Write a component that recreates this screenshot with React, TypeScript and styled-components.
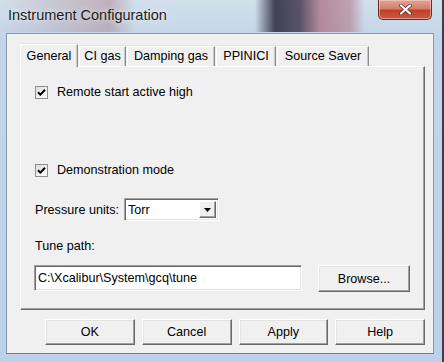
import { createGlobalStyle, styled } from 'styled-components';

const GlobalStyle = createGlobalStyle`
  html, body {
    margin: 0;
    padding: 0;
    width: 444px;
    height: 362px;
    overflow: hidden;
    font-family: "Liberation Sans", Arial, sans-serif;
    font-size: 12.6px;
    color: #000;
  }
`;

const tabs = [
  { label: 'General', width: 58 },
  { label: 'CI gas', width: 47 },
  { label: 'Damping gas', width: 88 },
  { label: 'PPINICI', width: 60 },
  { label: 'Source Saver', width: 92 },
];
const buttons = ['OK', 'Cancel', 'Apply', 'Help'];

const CheckIcon = () => (
  <svg width="9" height="9" viewBox="0 0 9 9">
    <path d="M1 4.2 L3.4 6.6 L8 1.8" fill="none" stroke="#000" strokeWidth="2" />
  </svg>
);

const App = () => {
  return (
    <>
      <GlobalStyle />
      <Window>
        <TitleBar>
          <Title>Instrument Configuration</Title>
          <CloseButton>
            <svg width="13" height="11" viewBox="0 0 13 11">
              <path d="M2 1.5 L11 9.5 M11 1.5 L2 9.5" stroke="#5a2a20" strokeWidth="3.6" strokeLinecap="round" />
              <path d="M2 1.5 L11 9.5 M11 1.5 L2 9.5" stroke="#fff" strokeWidth="2.2" strokeLinecap="round" />
            </svg>
          </CloseButton>
        </TitleBar>
        <Client>
          <TabRow>
            {tabs.map((t, i) => (
              <Tab key={t.label} $active={i === 0} $width={t.width}>
                {t.label}
              </Tab>
            ))}
          </TabRow>
          <Panel>
            <CheckRow $top={18}>
              <CheckBox>
                <CheckIcon />
              </CheckBox>
              Remote start active high
            </CheckRow>
            <CheckRow $top={64}>
              <CheckBox>
                <CheckIcon />
              </CheckBox>
              Demonstration mode
            </CheckRow>
            <FieldRow>
              <Label>Pressure units:</Label>
              <Select>
                <SelectValue>Torr</SelectValue>
                <DropButton>
                  <svg width="7" height="4" viewBox="0 0 7 4">
                    <path d="M0 0 H7 L3.5 4 Z" fill="#000" />
                  </svg>
                </DropButton>
              </Select>
            </FieldRow>
            <PathLabel>Tune path:</PathLabel>
            <PathRow>
              <TextInput>C:\Xcalibur\System\gcq\tune</TextInput>
              <Button $width={92} $height={27}>Browse...</Button>
            </PathRow>
          </Panel>
          <ButtonRow>
            {buttons.map((b) => (
              <Button key={b} $width={90} $height={26}>
                {b}
              </Button>
            ))}
          </ButtonRow>
        </Client>
      </Window>
    </>
  );
};

export default App;

const Window = styled.div`
  width: 444px;
  height: 362px;
  box-sizing: border-box;
  display: flex;
  flex-direction: column;
  border-right: 2px solid #3a3f4a;
  background:
    linear-gradient(90deg,
      rgba(196, 214, 232, 0) 0px,
      rgba(176, 140, 150, 0.55) 110px,
      rgba(196, 214, 232, 0) 135px,
      rgba(196, 214, 232, 0) 255px,
      rgba(40, 38, 56, 0.85) 275px,
      rgba(60, 50, 70, 0.8) 300px,
      rgba(170, 110, 130, 0.75) 320px,
      rgba(180, 120, 140, 0.6) 350px,
      rgba(196, 214, 232, 0) 365px) top / 100% 32px no-repeat,
    linear-gradient(180deg, #d2dfeb 0px, #c2d5e8 40px, #bcd2ea 100%);
`;

const TitleBar = styled.div`
  height: 33px;
  flex-shrink: 0;
  display: flex;
  align-items: flex-start;
  padding-left: 8px;
  padding-right: 10px;
`;

const Title = styled.div`
  margin-top: 7px;
  font-family: "Liberation Sans", Arial, sans-serif;
  font-size: 14.5px;
  color: #1e1e1e;
  text-shadow: 0 0 6px rgba(255, 255, 255, 0.9);
`;

const CloseButton = styled.div`
  margin-left: auto;
  width: 54px;
  height: 20px;
  box-sizing: border-box;
  display: flex;
  align-items: center;
  justify-content: center;
  border: 1px solid #6b2a22;
  border-top: none;
  border-radius: 0 0 5px 5px;
  background: linear-gradient(180deg, #e0a597 0%, #d27f6c 45%, #c0402a 55%, #c85a44 100%);
  box-shadow: inset 0 0 0 1px rgba(255, 220, 210, 0.5);
`;

const Client = styled.div`
  flex: 1;
  margin: 0 8px 8px 6px;
  padding: 10px 8px 0 13px;
  background: #f0f0f0;
  border: 1px solid #8a9aad;
  border-bottom-color: #6f8094;
  box-sizing: border-box;
  display: flex;
  flex-direction: column;
`;

const TabRow = styled.div`
  display: flex;
  align-items: flex-end;
  gap: 1px;
  height: 22px;
  position: relative;
  z-index: 1;
`;

const Tab = styled.div<{ $active?: boolean; $width: number }>`
  box-sizing: border-box;
  width: ${(p) => p.$width}px;
  height: ${(p) => (p.$active ? 23 : 20)}px;
  margin-bottom: ${(p) => (p.$active ? -1 : 0)}px;
  padding-top: ${(p) => (p.$active ? 4 : 2)}px;
  text-align: center;
  background: #f0f0f0;
  border-top: 1px solid #fff;
  border-left: 1px solid #fff;
  border-right: 1px solid #8d8d8d;
  box-shadow: inset -1px 0 0 #c8c8c8, 0 -1px 0 #e2e2e2;
  white-space: nowrap;
`;

const Panel = styled.div`
  height: 244px;
  box-sizing: border-box;
  border-top: 1px solid #fff;
  border-left: 1px solid #fff;
  border-right: 1px solid #6d6d6d;
  border-bottom: 1px solid #6d6d6d;
  box-shadow: inset -1px -1px 0 #a0a0a0;
  padding-left: 14px;
  display: flex;
  flex-direction: column;
`;

const CheckRow = styled.div<{ $top: number }>`
  margin-top: ${(p) => p.$top}px;
  display: flex;
  align-items: center;
  gap: 9px;
  height: 14px;
`;

const CheckBox = styled.div`
  width: 13px;
  height: 13px;
  box-sizing: border-box;
  border: 1px solid #8e8f8f;
  background: linear-gradient(135deg, #dcdcdc, #fff);
  display: flex;
  align-items: center;
  justify-content: center;
`;

const FieldRow = styled.div`
  margin-top: 21px;
  display: flex;
  align-items: center;
  gap: 5px;
`;

const Label = styled.div``;

const Select = styled.div`
  width: 95px;
  height: 23px;
  box-sizing: border-box;
  background: #fff;
  border-top: 1px solid #a0a0a0;
  border-left: 1px solid #a0a0a0;
  border-right: 1px solid #fff;
  border-bottom: 1px solid #fff;
  box-shadow: inset 1px 1px 0 #696969, inset -1px -1px 0 #e3e3e3;
  display: flex;
  align-items: stretch;
  padding: 2px;
`;

const SelectValue = styled.div`
  flex: 1;
  display: flex;
  align-items: center;
  padding-left: 1px;
`;

const DropButton = styled.div`
  width: 17px;
  box-sizing: border-box;
  background: #f0f0f0;
  border-top: 1px solid #fff;
  border-left: 1px solid #fff;
  border-right: 1px solid #696969;
  border-bottom: 1px solid #696969;
  box-shadow: inset -1px -1px 0 #a0a0a0;
  display: flex;
  align-items: center;
  justify-content: center;
`;

const PathLabel = styled.div`
  margin-top: 18px;
`;

const PathRow = styled.div`
  margin-top: 12px;
  display: flex;
  align-items: flex-start;
  gap: 16px;
  margin-left: -1px;
`;

const TextInput = styled.div`
  width: 268px;
  height: 26px;
  box-sizing: border-box;
  background: #fff;
  border-top: 1px solid #a0a0a0;
  border-left: 1px solid #a0a0a0;
  border-right: 1px solid #fff;
  border-bottom: 1px solid #fff;
  box-shadow: inset 1px 1px 0 #696969, inset -1px -1px 0 #e3e3e3;
  display: flex;
  align-items: center;
  padding-left: 3px;
`;

const Button = styled.div<{ $width: number; $height: number }>`
  width: ${(p) => p.$width}px;
  height: ${(p) => p.$height}px;
  box-sizing: border-box;
  background: #f0f0f0;
  border-top: 1px solid #fff;
  border-left: 1px solid #fff;
  border-right: 1px solid #696969;
  border-bottom: 1px solid #696969;
  box-shadow: inset -1px -1px 0 #a0a0a0, inset 1px 1px 0 #e3e3e3;
  display: flex;
  align-items: center;
  justify-content: center;
`;

const ButtonRow = styled.div`
  display: flex;
  gap: 7px;
  margin-top: 9px;
  margin-left: 25px;
`;
